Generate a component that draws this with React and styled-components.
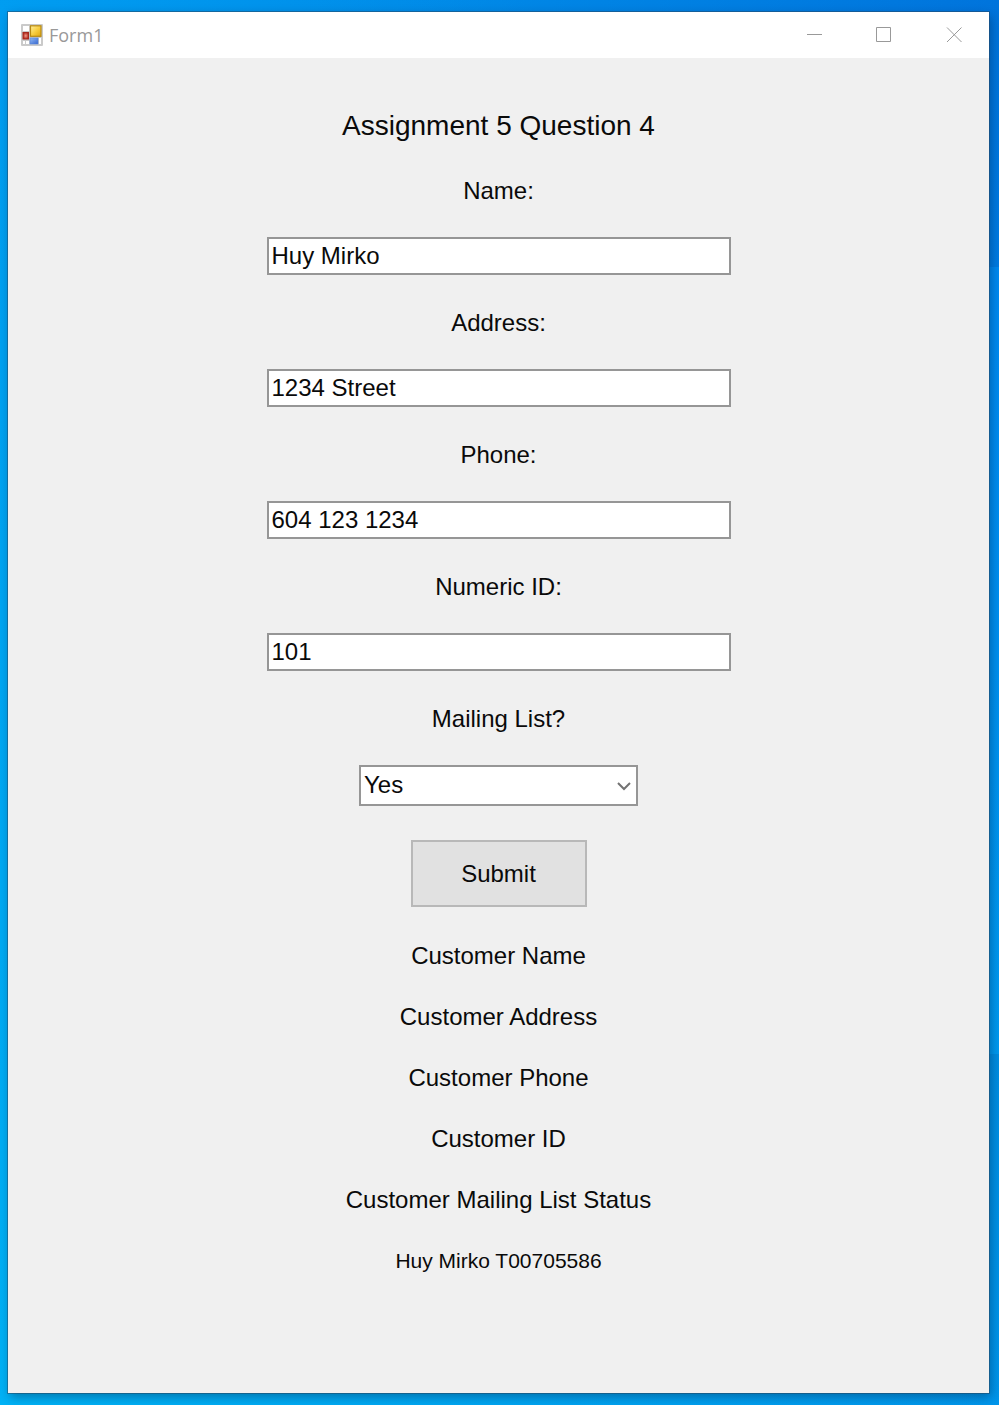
import React from "react";
import styled, { createGlobalStyle } from "styled-components";

const GlobalStyle = createGlobalStyle`
  *, *::before, *::after { box-sizing: border-box; }
  body {
    margin: 0;
    font-family: "Liberation Sans", Arial, sans-serif;
    color: #0a0a0a;
  }
`;

const Desktop = styled.div`
  display: flex;
  min-height: 100vh;
  padding: 12px 10px 12px 8px;
  background:
    radial-gradient(ellipse at 0% 100%, #00b2f6 0%, rgba(0, 178, 246, 0) 80%),
    linear-gradient(90deg, #009af0 0%, rgba(0, 154, 240, 0) 100%),
    linear-gradient(180deg, #0074dc 0%, #007ce4 19%, #008af2 19%, #0098f0 75%, #008ae0 75%, #0092ea 100%);
`;

const Window = styled.div`
  flex: 1;
  display: flex;
  flex-direction: column;
  min-width: 0;
  background: #f0f0f0;
  box-shadow: 0 0 0 1px rgba(40, 70, 95, 0.5), 2px 4px 10px rgba(0, 30, 60, 0.4);
`;

const TitleBar = styled.header`
  display: flex;
  align-items: center;
  height: 46px;
  padding: 0 0 0 13px;
  background: #fff;
`;

const WindowTitle = styled.h1`
  flex: 1;
  margin: 0 0 0 6px;
  color: #999;
  font: 400 18px/24px "Open Sans", "Noto Sans", sans-serif;
`;

const WindowButton = styled.button`
  display: flex;
  align-items: center;
  justify-content: center;
  width: 70px;
  height: 46px;
  padding: 0;
  border: 0;
  background: transparent;
  color: #999;
`;

const Form = styled.form`
  display: flex;
  flex-direction: column;
  align-items: center;
  padding: 50px 20px 40px;
`;

const Heading = styled.h2`
  margin: 0 0 33px;
  font-size: 28px;
  font-weight: 400;
  line-height: 36px;
`;

const Field = styled.div`
  display: flex;
  flex-direction: column;
  align-items: center;
  gap: 32px;
  width: 100%;
  margin-bottom: 34px;
`;

const Label = styled.label`
  font-size: 24px;
  line-height: 28px;
`;

const TextBox = styled.input`
  width: 464px;
  max-width: 100%;
  height: 38px;
  padding: 0 3px;
  border: 2px solid #969696;
  border-radius: 0;
  background: #fff;
  color: inherit;
  font: 24px "Liberation Sans", Arial, sans-serif;
`;

const SelectFrame = styled.div`
  display: grid;
  align-items: center;
  width: 279px;
  max-width: 100%;

  & > * { grid-area: 1 / 1; }

  svg {
    justify-self: end;
    margin-right: 7px;
    pointer-events: none;
  }
`;

const Select = styled.select`
  width: 100%;
  height: 41px;
  padding: 0 32px 3px 3px;
  border: 2px solid #969696;
  border-radius: 0;
  appearance: none;
  background: #fff;
  color: inherit;
  font: 24px "Liberation Sans", Arial, sans-serif;
`;

const SubmitButton = styled.button`
  width: 176px;
  height: 67px;
  padding: 0;
  border: 2px solid #b8b8b8;
  background: #e1e1e1;
  color: inherit;
  font: 24px "Liberation Sans", Arial, sans-serif;
`;

const Results = styled.div`
  display: flex;
  flex-direction: column;
  align-items: center;
  gap: 33px;
  margin-top: 35px;
`;

const Result = styled.output`
  font-size: 24px;
  line-height: 28px;
`;

const Author = styled.p`
  margin: 0;
  font-size: 21px;
  line-height: 28px;
`;

function FormIcon() {
  return (
    <svg width="22" height="22" viewBox="0 0 22 22" aria-hidden="true">
      <defs>
        <linearGradient id="yellow" x1="0" y1="0" x2="1" y2="1">
          <stop offset="0" stopColor="#fff0a0" />
          <stop offset="0.5" stopColor="#f8ce42" />
          <stop offset="1" stopColor="#e2a60c" />
        </linearGradient>
        <radialGradient id="red">
          <stop offset="0" stopColor="#ee9a8a" />
          <stop offset="1" stopColor="#b42a1c" />
        </radialGradient>
        <linearGradient id="blue" x1="0" y1="0" x2="1" y2="1">
          <stop offset="0" stopColor="#91b9f5" />
          <stop offset="1" stopColor="#3768d0" />
        </linearGradient>
      </defs>
      <rect width="22" height="22" rx="1" fill="#cacaca" />
      <path d="M2 2h6v5H2zM2 17h2v3H2zM5 17h3v3H5zM18 14h2v6h-2z" fill="#fff" />
      <rect x="9.5" y="1.8" width="10.5" height="10.5" fill="url(#yellow)" stroke="#b98a12" strokeWidth="1.2" />
      <rect x="2" y="8.5" width="5.5" height="6.5" fill="url(#red)" stroke="#a52a1e" />
      <rect x="9" y="14" width="8" height="6" fill="url(#blue)" stroke="#5682d8" strokeWidth="0.6" />
    </svg>
  );
}

function ControlIcon({ d }) {
  return (
    <svg width="16" height="16" viewBox="0 0 16 16" fill="none" stroke="currentColor" aria-hidden="true">
      <path d={d} />
    </svg>
  );
}

const controls = [
  { name: "Minimize", d: "M1 7.5h15" },
  { name: "Maximize", d: "M0.5 0.5h14v14H0.5z" },
  { name: "Close", d: "M1 0.5l14.5 14.5M15.5 0.5L1 15" },
];

const fields = [
  { id: "name", label: "Name:", value: "Huy Mirko" },
  { id: "address", label: "Address:", value: "1234 Street" },
  { id: "phone", label: "Phone:", value: "604 123 1234" },
  { id: "numeric-id", label: "Numeric ID:", value: "101" },
];

const results = [
  "Customer Name",
  "Customer Address",
  "Customer Phone",
  "Customer ID",
  "Customer Mailing List Status",
];

export default function App() {
  return (
    <>
      <GlobalStyle />
      <Desktop>
        <Window>
          <TitleBar>
            <FormIcon />
            <WindowTitle>Form1</WindowTitle>
            {controls.map((c) => (
              <WindowButton key={c.name} type="button" aria-label={c.name}>
                <ControlIcon d={c.d} />
              </WindowButton>
            ))}
          </TitleBar>
          <Form onSubmit={(e) => e.preventDefault()}>
            <Heading>Assignment 5 Question 4</Heading>
            {fields.map((f) => (
              <Field key={f.id}>
                <Label htmlFor={f.id}>{f.label}</Label>
                <TextBox id={f.id} type="text" defaultValue={f.value} />
              </Field>
            ))}
            <Field>
              <Label htmlFor="mailing">Mailing List?</Label>
              <SelectFrame>
                <Select id="mailing" defaultValue="Yes">
                  <option>Yes</option>
                  <option>No</option>
                </Select>
                <svg width="14" height="10" viewBox="0 0 14 10" fill="none" stroke="#737373" strokeWidth="2" aria-hidden="true">
                  <path d="M1 2l6 6 6-6" />
                </svg>
              </SelectFrame>
            </Field>
            <SubmitButton type="submit">Submit</SubmitButton>
            <Results>
              {results.map((r) => (
                <Result key={r}>{r}</Result>
              ))}
              <Author>Huy Mirko T00705586</Author>
            </Results>
          </Form>
        </Window>
      </Desktop>
    </>
  );
}
